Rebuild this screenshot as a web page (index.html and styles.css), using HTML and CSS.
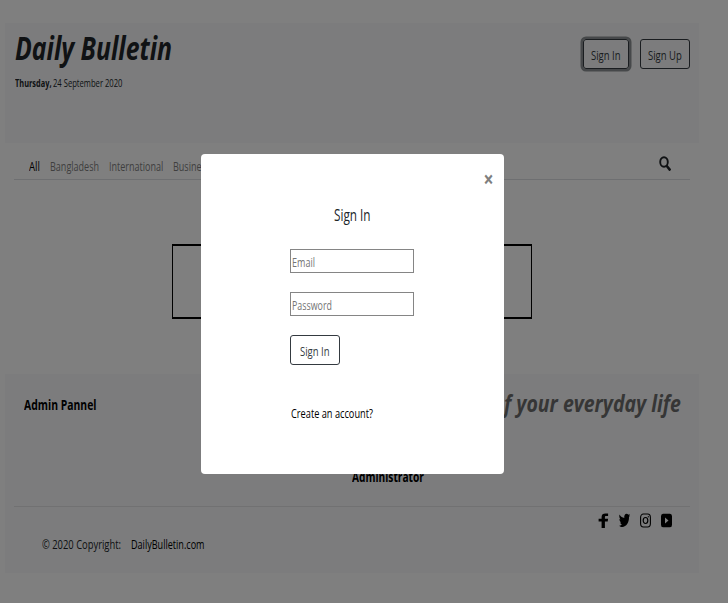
FILE: index.html
```
<!DOCTYPE html>
<html lang="en">
<head>
<meta charset="utf-8">
<title>Daily Bulletin</title>
<link rel="stylesheet" href="styles.css">
</head>
<body>
<div class="page">
  <header class="masthead">
    <div>
      <h1 class="brand">Daily Bulletin</h1>
      <p class="date"><b>Thursday,</b><span>24 September 2020</span></p>
    </div>
    <div class="auth">
      <button class="btn btn-in focused"><span>Sign In</span></button>
      <button class="btn btn-up"><span>Sign Up</span></button>
    </div>
  </header>
  <nav class="nav">
    <a class="active"><span>All</span></a>
    <a class="bd"><span>Bangladesh</span></a>
    <a class="intl"><span>International</span></a>
    <a><span>Business</span></a>
    <svg class="search" viewBox="0 0 12 15" preserveAspectRatio="none"><ellipse cx="5" cy="6" rx="3.8" ry="4.8" fill="none" stroke="#212529" stroke-width="1.9"/><path d="M7.8 10 L10.7 13.6" stroke="#212529" stroke-width="2.5" stroke-linecap="round"/></svg>
  </nav>
  <main class="frame"></main>
  <footer class="footer">
    <div class="footer-top">
      <b class="admin">Admin Pannel</b>
      <em class="tagline">of your everyday life</em>
    </div>
    <b class="role">Administrator</b>
    <div class="footer-bottom">
      <p class="copy"><span>© 2020 Copyright:</span><a>DailyBulletin.com</a></p>
      <div class="social">
        <svg viewBox="0 0 11 15"><path d="M3.6 15V8.5H.6V5.8h3V4C3.6 1.500 5 .4 7.500.4h2.600v2.700H8.300C7.100 3.100 6.900 3.600 6.900 4.500v1.300h3.200l-.4 2.700H6.900V15z"/></svg>
        <svg viewBox="0 0 11 15"><path d="M.5 1.600C1.700 3.700 3.400 4.900 5.300 5 4.900 2.400 6 .8 7.600.8c.7 0 1.300.4 1.700.9L10.800 1 10.100 2.700 11 2.500 10 4.100C10.200 9.300 7.300 14 3.300 14 2.100 14 1 13.500.1 12.700c1.200.1 2.300-.3 3.100-1.100-1-.2-1.700-1-2-2.200h.9C1.100 8.900.4 7.700.4 6.100l1 .3C.4 5.200 0 3.300.5 1.600z"/></svg>
        <svg viewBox="0 0 11 15"><g fill="none" stroke="#000"><rect x=".6" y="1" width="9.800" height="13" rx="2.800" ry="3.500" stroke-width="1.100"/><ellipse cx="5.500" cy="7.500" rx="2.300" ry="3" stroke-width="1.200"/></g><ellipse cx="8.300" cy="3.800" rx=".6" ry=".8"/></svg>
        <svg viewBox="0 0 11 15"><path fill-rule="evenodd" d="M2 .8h7q2 0 2 2.500v8.400q0 2.500-2 2.500H2q-2 0-2-2.500V3.300Q0 .8 2 .8zM4 4.600v5.800l3.500-2.900z"/></svg>
      </div>
    </div>
  </footer>
</div>
<div class="backdrop">
  <section class="modal">
    <div class="close"><span>×</span></div>
    <h2 class="modal-title">Sign In</h2>
    <form class="form">
      <div class="field"><span class="email">Email</span></div>
      <div class="field"><span class="password">Password</span></div>
      <button type="button" class="btn btn-submit"><span>Sign In</span></button>
      <a class="create">Create an account?</a>
    </form>
  </section>
</div>
</body>
</html>
```
FILE: styles.css
```
* { box-sizing: border-box; }
body {
  margin: 0;
  height: 603px;
  overflow: hidden;
  background: #fff;
  color: #212529;
  font: 13.5px/20px "Open Sans", "Noto Sans", sans-serif;
}
h1, h2, p { margin: 0; }

/* Condensed lettering: every text run is narrowed horizontally. */
.brand, .date b, .date span, .btn span, .nav span, .admin, .tagline, .role,
.copy span, .copy a, .modal-title, .field span, .create, .close span {
  display: block;
  white-space: nowrap;
  transform-origin: 0 50%;
  transform: scaleX(var(--s, 0.669));
}

.page { padding: 23px 29px 0 5px; }
.masthead {
  display: flex;
  justify-content: space-between;
  height: 120px;
  padding: 5px 9px 0 9px;
  background: #f8f9fa;
}
.brand { --s: 0.775; margin-left: 1px; font: italic 700 32px/40px "Open Sans", sans-serif; }
.date { --s: 0.694; display: flex; margin: 7px 0 0 0.5px; font-size: 11px; line-height: 16px; }
.date b { --s: 0.672; width: 38.5px; }

.auth { display: flex; gap: 11px; padding-top: 11px; }
.btn {
  height: 30px;
  padding: 0 0 0 7px;
  border: 1px solid #343a40;
  border-radius: 3px;
  background: transparent;
  color: #343a40;
  font: inherit;
  text-align: left;
}
.btn span { --s: 0.703; padding-top: 1px; }
.btn-in { width: 46px; }
.btn-up { width: 50px; }
.focused { box-shadow: 0 0 0 2.5px #8d9194; }

.nav {
  display: flex;
  height: 37px;
  margin: 0 9px;
  padding: 13px 0 0 15px;
  border-bottom: 1px solid #dcdfe2;
  color: #7f7f7f;
}
.nav a { width: 40px; }
.nav .active { --s: 0.715; width: 20.5px; color: #000; }
.nav .bd { width: 59.5px; }
.nav .intl { width: 64px; }
.search { width: 12px; height: 15px; margin: 0 19px 0 auto; }

.frame { width: 360px; height: 75px; margin: 64px 0 0 167px; border: 2px solid #000; border-width: 2px 1.5px; }

.footer { height: 199px; margin-top: 55px; padding: 0 9px; background: #f8f9fa; color: #000; }
.footer-top { display: flex; justify-content: space-between; height: 92px; padding: 12px 9px 0 10px; }
.admin { --s: 0.77; padding-top: 9px; }
.tagline { --s: 0.812; transform-origin: 100% 50%; color: #6c6c6c; font: italic 700 24px/34px "Open Sans", sans-serif; }
.role { --s: 0.754; margin: 1px 0 0 338px; }
.footer-bottom { display: flex; justify-content: space-between; margin-top: 19px; border-top: 1px solid #e2e3e5; }
.copy { display: flex; padding: 27px 0 0 28px; color: #212529; }
.copy span { --s: 0.695; width: 89px; }
.copy a { --s: 0.672; color: #000; }
.social { display: flex; gap: 10px; padding: 6px 18.5px 0 0; }
.social svg { width: 11px; height: 15px; }

.backdrop {
  position: fixed;
  inset: 0;
  padding: 154px 0 0 200.5px;
  background: rgba(0, 0, 0, 0.5);
}
.modal { width: 303.5px; height: 320px; padding-top: 14px; border-radius: 4px; background: #fff; }
.close { display: flex; justify-content: flex-end; height: 37px; padding-right: 10px; }
.close span { --s: 0.8; color: #7f7f7f; font-size: 22px; font-weight: 700; transform-origin: 100% 50%; }
.modal-title { --s: 0.734; margin-left: 133px; font: 400 16px/20px "Open Sans", sans-serif; }
.form { display: flex; flex-direction: column; align-items: flex-start; padding: 24px 0 0 89.5px; }
.field { width: 124px; height: 24px; margin-bottom: 19px; padding: 2px 0 0 1px; border: 1px solid #858585; color: #757575; }
.password { --s: 0.657; }
.btn-submit { width: 50px; padding-left: 9px; }
.create { --s: 0.683; margin: 38px 0 0 0.5px; color: #000; }
```
